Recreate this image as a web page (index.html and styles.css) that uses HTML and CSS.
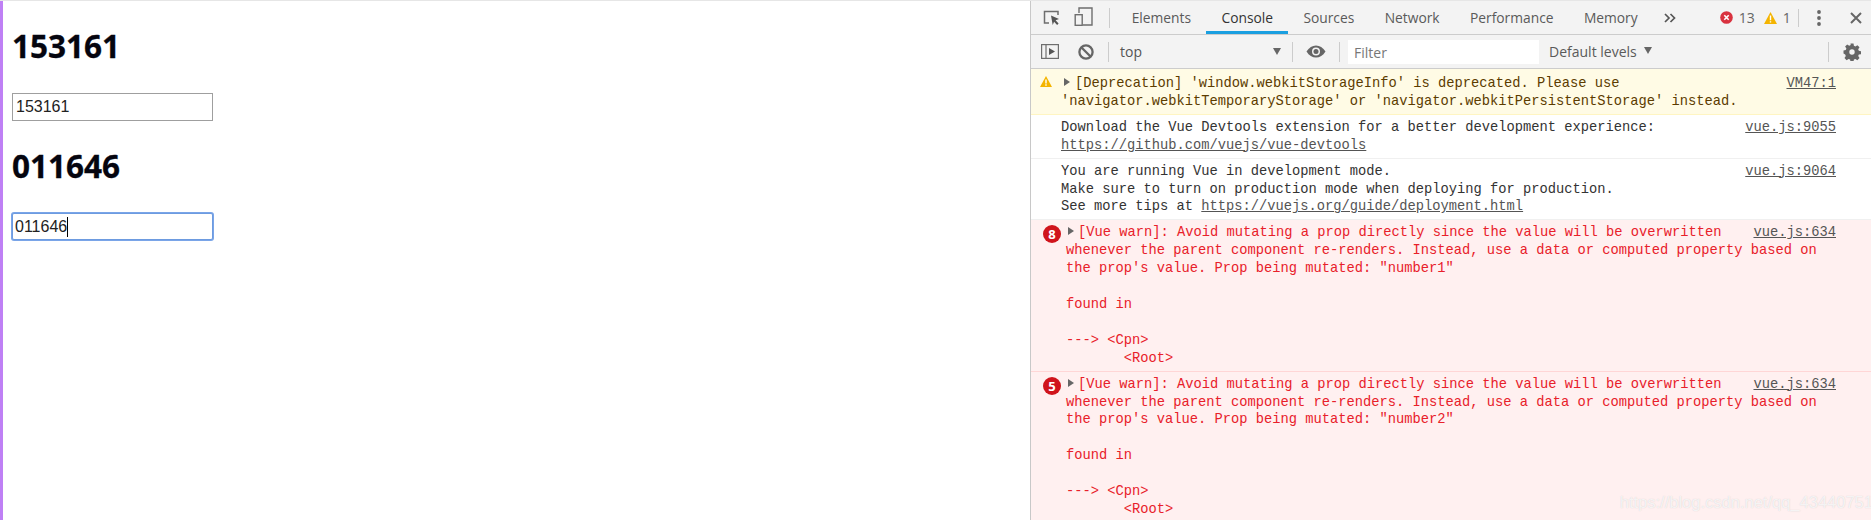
FILE: index.html
```html
<!DOCTYPE html>
<html lang="en">
<head>
<meta charset="utf-8">
<title>Vue prop demo</title>
<link rel="stylesheet" href="styles.css">
</head>
<body>
<div class="screen">
  <main class="page">
    <h2 class="num">153161</h2>
    <input class="field" type="text" value="153161">
    <h2 class="num">011646</h2>
    <div class="field field-focus">011646<span class="caret"></span></div>
  </main>
  <section class="devtools">
    <div class="tabbar">
      <button class="ico ico-inspect"><svg width="18" height="18" viewBox="0 0 18 18"><path d="M6 14H1.5V2.5H15V6" fill="none" stroke="#6e6e6e" stroke-width="1.5"/><path d="M8 6.5l8 3.6-3.4 1.2 3 3.2-1.5 1.4-3-3.2-1.4 3.3z" fill="#555"/></svg></button>
      <button class="ico ico-device"><svg width="20" height="20" viewBox="0 0 20 20"><path d="M5 6V1h13v17H9" fill="none" stroke="#6e6e6e" stroke-width="1.4"/><rect x="1.2" y="7.7" width="7" height="10.6" fill="none" stroke="#6e6e6e" stroke-width="1.4"/></svg></button>
      <span class="sep sep-tabs"></span>
      <nav class="tabs">
        <span class="tab">Elements</span>
        <span class="tab tab-on">Console</span>
        <span class="tab">Sources</span>
        <span class="tab">Network</span>
        <span class="tab">Performance</span>
        <span class="tab">Memory</span>
      </nav>
      <svg class="more" width="12" height="10" viewBox="0 0 12 10"><path d="M1 1l4 4-4 4M6.500 1l4 4-4 4" fill="none" stroke="#555" stroke-width="1.7"/></svg>
      <span class="counts">
        <svg width="13" height="13" viewBox="0 0 13 13"><circle cx="6.500" cy="6.500" r="6.300" fill="#d9323f"/><path d="M4.300 4.300l4.400 4.400M8.700 4.300l-4.400 4.400" stroke="#fff" stroke-width="1.600"/></svg>
        <span class="count-n">13</span>
        <svg class="count-w" width="13" height="12" viewBox="0 0 13 12"><path d="M6.500 0L13 12H0z" fill="#f4b400"/><path d="M5.800 3.500h1.400v4.800H5.800zM5.800 9.200h1.400v1.400H5.800z" fill="#fff"/></svg>
        <span class="count-n">1</span>
      </span>
      <span class="sep sep-counts"></span>
      <svg class="dots" width="4" height="16" viewBox="0 0 4 16"><circle cx="2" cy="2" r="1.900" fill="#666"/><circle cx="2" cy="8" r="1.900" fill="#666"/><circle cx="2" cy="14" r="1.900" fill="#666"/></svg>
      <svg class="close" width="12" height="12" viewBox="0 0 12 12"><path d="M1 1l10 10M11 1L1 11" stroke="#666" stroke-width="2"/></svg>
    </div>
    <div class="toolbar">
      <svg class="tool-side" width="18" height="15" viewBox="0 0 18 15"><rect x=".6" y=".6" width="16.800" height="13.800" fill="none" stroke="#6e6e6e" stroke-width="1.200"/><path d="M5 1v13" stroke="#6e6e6e" stroke-width="1.200"/><path d="M8 4l6 3.500-6 3.500z" fill="#555"/></svg>
      <svg class="tool-block" width="16" height="16" viewBox="0 0 16 16"><circle cx="8" cy="8" r="6.600" fill="none" stroke="#666" stroke-width="2.300"/><path d="M3.500 3.500l9 9" stroke="#666" stroke-width="2.300"/></svg>
      <span class="sep sep-a"></span>
      <span class="context">top</span>
      <span class="tri tri-context"></span>
      <span class="sep sep-b"></span>
      <svg class="eye" width="20" height="13" viewBox="0 0 20 13"><path d="M.5 6.500C3 2.500 6.300.5 10 .5s7 2 9.500 6c-2.500 4-5.800 6-9.500 6s-7-2-9.500-6z" fill="#666"/><circle cx="10" cy="6.500" r="4" fill="#f3f3f3"/><circle cx="10" cy="6.500" r="2.500" fill="#666"/></svg>
      <span class="sep sep-c"></span>
      <div class="filter">Filter</div>
      <span class="levels">Default levels</span>
      <span class="tri tri-levels"></span>
      <span class="sep sep-d"></span>
      <svg class="gear" width="18" height="18" viewBox="0 0 18 18"><path fill="#666" fill-rule="evenodd" d="M7.500.5h3l.4 2.300 1.500.7 2-1.300 2.100 2.100-1.300 2 .6 1.500 2.200.4v3l-2.200.4-.6 1.500 1.300 2-2.100 2.100-2-1.300-1.500.7-.4 2.200h-3l-.4-2.200-1.500-.7-2 1.300-2.100-2.100 1.300-2-.6-1.500L.5 10.500v-3l2.300-.4.6-1.500-1.300-2 2.100-2.100 2 1.300 1.500-.7zM9 6.300a2.700 2.700 0 100 5.400 2.700 2.700 0 000-5.400z"/></svg>
    </div>
    <div class="log">
      <div class="row row-warn">
        <svg class="row-icon warn-icon" width="12" height="11" viewBox="0 0 12 11"><path d="M6 0l6 11H0z" fill="#f4b400"/><path d="M5.300 3.500h1.400v4H5.300zM5.300 8.300h1.400v1.400H5.300z" fill="#fff"/></svg>
        <a class="src">VM47:1</a><div class="msg"><span class="arrow"></span>[Deprecation] 'window.webkitStorageInfo' is deprecated. Please use
'navigator.webkitTemporaryStorage' or 'navigator.webkitPersistentStorage' instead.</div>
      </div>
      <div class="row row-info">
        <a class="src">vue.js:9055</a><div class="msg">Download the Vue Devtools extension for a better development experience:
<a class="lnk">https://github.com/vuejs/vue-devtools</a></div>
      </div>
      <div class="row row-info">
        <a class="src">vue.js:9064</a><div class="msg">You are running Vue in development mode.
Make sure to turn on production mode when deploying for production.
See more tips at <a class="lnk">https://vuejs.org/guide/deployment.html</a></div>
      </div>
      <div class="row row-err">
        <span class="row-icon badge">8</span>
        <a class="src">vue.js:634</a><div class="msg"><span class="arrow"></span>[Vue warn]: Avoid mutating a prop directly since the value will be overwritten
whenever the parent component re-renders. Instead, use a data or computed property based on
the prop's value. Prop being mutated: "number1"

found in

---&gt; &lt;Cpn&gt;
       &lt;Root&gt;</div>
      </div>
      <div class="row row-err">
        <span class="row-icon badge">5</span>
        <a class="src">vue.js:634</a><div class="msg"><span class="arrow"></span>[Vue warn]: Avoid mutating a prop directly since the value will be overwritten
whenever the parent component re-renders. Instead, use a data or computed property based on
the prop's value. Prop being mutated: "number2"

found in

---&gt; &lt;Cpn&gt;
       &lt;Root&gt;</div>
      </div>
    </div>
    <div class="mark">https://blog.csdn.net/qq_43440751</div>
  </section>
</div>
</body>
</html>
```
FILE: styles.css
```css
* { box-sizing: border-box; }
html, body { margin: 0; height: 100%; overflow: hidden; background: #fff; }
.screen { display: flex; width: 1871px; height: 520px; overflow: hidden; border-top: 1px solid #e6e6e6; }

.page { width: 1030px; flex: none; border-left: 3px solid #bf80f5; padding: 25px 0 0 9px; }
.num { margin: 0 0 27px; height: 40px; font: 700 31.500px/40px "Noto Sans", sans-serif; color: #05050f; -webkit-text-stroke: .3px #05050f; }
.field { display: block; width: 201px; height: 28px; margin: 0 0 25px; padding: 0 1px 0 3px; border: 1px solid #9f9f9f; background: #fff; outline: 0; font: 16px/26px "Liberation Sans", sans-serif; color: #222; border-radius: 0; }
.field-focus { border: 1px solid #6d9be0; box-shadow: 0 0 0 1px #7aa5e8; border-radius: 2px; padding-left: 2px; height: 27px; display: flex; align-items: center; }
.caret { width: 1px; height: 20px; background: #000; }

.devtools { position: relative; flex: 1; min-width: 0; border-left: 1px solid #c8c8c8; font-family: "Open Sans", "Noto Sans", sans-serif; }
.tabbar, .toolbar { display: flex; align-items: center; background: #f3f3f3; border-bottom: 1px solid #ccc; color: #5a5a5a; }
.tabbar { height: 34px; padding-left: 12px; }
.toolbar { height: 34px; padding-left: 10px; }
.ico { padding: 0; border: 0; background: none; display: flex; }
.ico-device { margin-left: 13px; margin-bottom: 2px; }
.sep { width: 1px; height: 20px; background: #ccc; flex: none; }
.sep-tabs { margin-left: 15px; }
.tabs { display: flex; height: 100%; margin-left: 6.500px; }
.tab { display: flex; align-items: center; height: 33px; padding: 0 15.200px; font-size: 13.800px; color: #5a5a5a; }
.tab-on { color: #333; border-bottom: 3px solid #1a9fe0; padding-top: 3px; }
.more { margin-left: 11px; }
.counts { display: flex; align-items: center; margin-left: 44px; font-size: 14px; color: #666; }
.count-n { margin-left: 6px; }
.count-w { margin-left: 9px; }
.sep-counts { margin-left: 7px; height: 18px; }
.dots { margin-left: 18px; }
.close { margin-left: 29px; }

.tool-block { margin-left: 19px; }
.sep-a { margin-left: 14px; }
.context { margin-left: 11px; width: 152px; font-size: 14px; color: #555; }
.tri { width: 0; height: 0; border-left: 4px solid transparent; border-right: 4px solid transparent; border-top: 7px solid #666; flex: none; }
.tri-context { margin-left: 1px; }
.sep-b { margin-left: 11px; }
.eye { margin-left: 13px; }
.sep-c { margin-left: 13px; }
.filter { width: 191px; height: 24px; margin-left: 8px; padding-left: 6px; background: #fff; font-size: 14px; line-height: 25px; color: #777; }
.levels { margin-left: 10px; font-size: 14px; color: #5a5a5a; }
.tri-levels { margin-left: 7px; margin-top: -2px; }
.sep-d { margin-left: 176px; }
.gear { margin-left: 14px; }

.log { padding-top: 2px; font: 13.750px/17.900px "Liberation Mono", monospace; }
.row { position: relative; padding: 4px 35px 3px 0; border-bottom: 1px solid #f0f0f0; color: #333; }
.msg { white-space: pre; }
.src { float: right; color: #555; text-decoration: underline; }
.lnk { color: #545454; text-decoration: underline; }
.row-info { padding-left: 30px; }
.row-warn { padding-left: 30px; margin-top: -2px; padding-top: 6px; background: #fffbe5; border-bottom-color: #fff5c2; color: #5c3c00; }
.row-err { padding-left: 35px; background: #fff0f0; border-bottom-color: #ffd6d6; color: #e8202a; }
.arrow { display: inline-block; width: 0; height: 0; margin: 0 4px 1px 2px; border-left: 6px solid #666; border-top: 4px solid transparent; border-bottom: 4px solid transparent; }
.row-warn .arrow { margin: 0 5px 1px 3px; }
.row-icon { position: absolute; }
.warn-icon { left: 9px; top: 7px; }
.badge { left: 12px; top: 5px; width: 18px; height: 18px; border-radius: 50%; background: #d0141c; color: #fff; font: 700 13px/18px "Noto Sans", sans-serif; text-align: center; }

.mark { position: absolute; left: 589px; bottom: 8px; font: 16.500px/20px "Liberation Sans", sans-serif; color: rgba(255,255,255,.75); text-shadow: 0 0 1px rgba(190,190,190,.7); }
```
